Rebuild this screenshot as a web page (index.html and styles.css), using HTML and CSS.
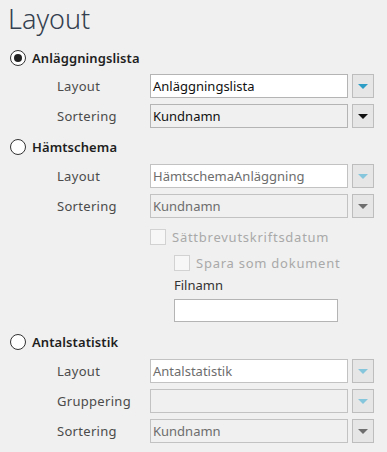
FILE: index.html
```html
<!DOCTYPE html>
<html lang="sv">
<head>
    <meta charset="UTF-8">
    <title>Layout</title>
    <link rel="stylesheet" href="styles.css">
</head>
<body>
    <div class="panel">
        <h1 class="title">Layout</h1>

        <div class="option first">
            <span class="radio checked"></span>
            <span class="option-name">Anläggningslista</span>
        </div>
        <div class="rows">
            <div class="row">
                <span class="label">Layout</span>
                <div class="box edit">Anläggningslista</div>
                <div class="drop"><span class="arrow blue"></span></div>
            </div>
            <div class="row">
                <span class="label">Sortering</span>
                <div class="box list">Kundnamn</div>
                <div class="drop"><span class="arrow black"></span></div>
            </div>
        </div>

        <div class="option">
            <span class="radio"></span>
            <span class="option-name">Hämtschema</span>
        </div>
        <div class="rows">
            <div class="row">
                <span class="label">Layout</span>
                <div class="box edit off">HämtschemaAnläggning</div>
                <div class="drop"><span class="arrow blue-off"></span></div>
            </div>
            <div class="row">
                <span class="label">Sortering</span>
                <div class="box list off">Kundnamn</div>
                <div class="drop"><span class="arrow grey"></span></div>
            </div>
        </div>
        <div class="extras">
            <div class="check">
                <span class="checkbox"></span>
                <span class="check-text">Sättbrevutskriftsdatum</span>
            </div>
            <div class="check indent second">
                <span class="checkbox"></span>
                <span class="check-text">Spara som dokument</span>
            </div>
            <div class="file-label indent">Filnamn</div>
            <div class="file-input indent"></div>
        </div>

        <div class="option last">
            <span class="radio"></span>
            <span class="option-name">Antalstatistik</span>
        </div>
        <div class="rows">
            <div class="row">
                <span class="label">Layout</span>
                <div class="box edit off">Antalstatistik</div>
                <div class="drop"><span class="arrow blue-off"></span></div>
            </div>
            <div class="row">
                <span class="label">Gruppering</span>
                <div class="box list off"></div>
                <div class="drop"><span class="arrow blue-off"></span></div>
            </div>
            <div class="row">
                <span class="label">Sortering</span>
                <div class="box list off">Kundnamn</div>
                <div class="drop"><span class="arrow grey"></span></div>
            </div>
        </div>
    </div>
</body>
</html>
```

FILE: styles.css
```css
body {
    margin: 0;
    background: #f0f0f0;
    font-family: 'Noto Sans', sans-serif;
    font-size: 13px;
    color: #222;
}

.panel {
    padding-left: 8px;
}

.title {
    margin: 2px 0 0;
    font-size: 27px;
    font-weight: 300;
    line-height: 34px;
    color: #34404f;
}

.option {
    display: flex;
    align-items: center;
    gap: 6px;
    height: 20px;
    margin-top: 9px;
    margin-left: 2px;
}

.option.first {
    margin-top: 12px;
}

.option.last {
    margin-top: 10px;
}

.radio {
    width: 14px;
    height: 14px;
    border: 1px solid #333;
    border-radius: 50%;
    background: #fff;
    display: flex;
    align-items: center;
    justify-content: center;
}

.radio.checked::after {
    content: "";
    width: 8px;
    height: 8px;
    border-radius: 50%;
    background: #222;
}

.option-name {
    font-size: 13px;
    font-weight: 600;
    letter-spacing: 0.1px;
    color: #1e1e1e;
}

.rows {
    display: flex;
    flex-direction: column;
    gap: 6px;
    margin-top: 7px;
    margin-left: 49px;
}

.option.first + .rows {
    margin-top: 6px;
}

.row {
    display: grid;
    grid-template-columns: 89px 198px 22px;
    column-gap: 4px;
    height: 24px;
    align-items: center;
}

.label {
    color: #4b4b4b;
    letter-spacing: 0.3px;
}

.box {
    box-sizing: border-box;
    height: 24px;
    padding: 0 2px;
    line-height: 22px;
    border: 1px solid #b4b4b4;
    background: #fff;
    color: #111;
    white-space: nowrap;
}

.box.list {
    background: #f0f0f0;
}

.box.off {
    color: #6d6d6d;
    border-color: #c2c2c2;
}

.drop {
    box-sizing: border-box;
    height: 24px;
    border: 1px solid #bdbdbd;
    background: #e6e6e6;
    display: flex;
    align-items: center;
    justify-content: center;
}

.arrow {
    width: 0;
    height: 0;
    border-left: 5px solid transparent;
    border-right: 5px solid transparent;
    border-top: 5px solid #000;
    margin-top: 1px;
}

.arrow.blue {
    border-top-color: #2d9dc6;
}

.arrow.blue-off {
    border-top-color: #86c6dc;
}

.arrow.black {
    border-top-color: #111;
}

.arrow.grey {
    border-top-color: #6e6e6e;
}

.extras {
    margin-left: 142px;
    margin-top: 11px;
}

.check {
    display: flex;
    align-items: center;
    gap: 6px;
    height: 16px;
}

.check.second {
    margin-top: 10px;
}

.checkbox {
    box-sizing: border-box;
    width: 16px;
    height: 16px;
    border: 1px solid #d2d2d2;
    background: #f7f7f7;
}

.check-text {
    color: #a9a9a9;
    letter-spacing: 0.75px;
}

.indent {
    margin-left: 24px;
}

.file-label {
    margin-top: 7px;
    height: 14px;
    line-height: 14px;
    color: #333;
}

.file-input {
    box-sizing: border-box;
    margin-top: 7px;
    width: 164px;
    height: 23px;
    border: 1px solid #b4b4b4;
    background: #fff;
}
```
